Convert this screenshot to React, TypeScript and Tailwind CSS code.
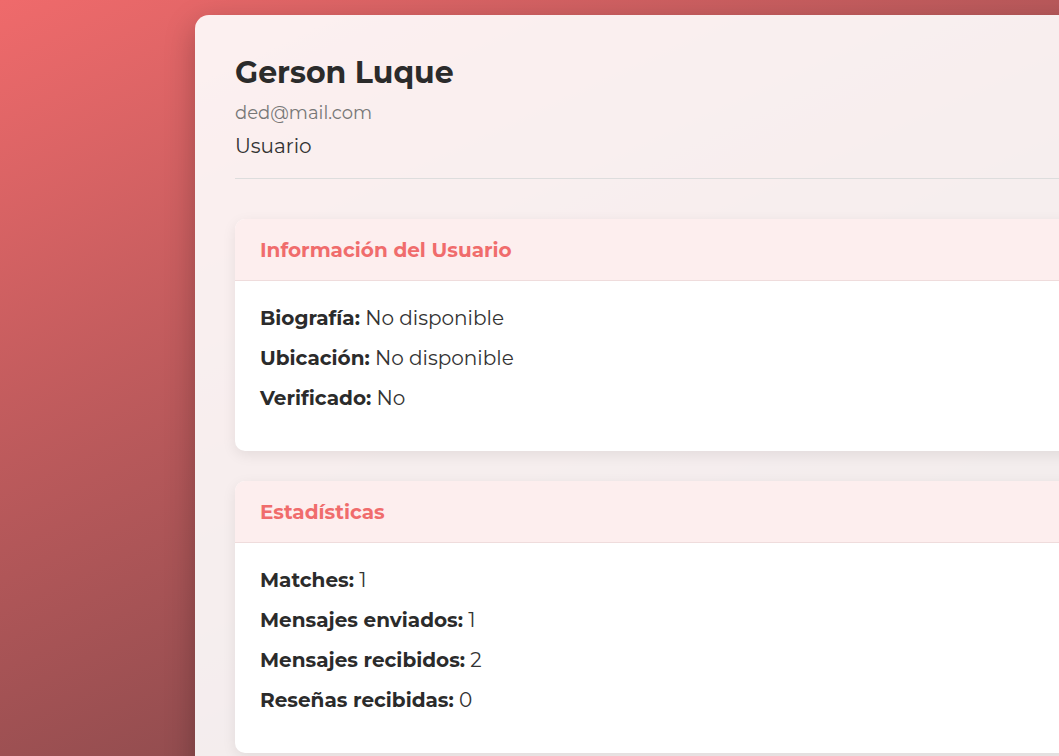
import React from "react";

const font = { fontFamily: '"Montserrat", "Noto Sans", "Open Sans", sans-serif' };

function Row({ label, value }: { label: string; value: string }) {
  return (
    <p className="text-[20px] leading-[26px] text-[#333]">
      <span className="font-bold text-[#2b2b2b]">{label}</span> {value}
    </p>
  );
}

function Section({ title, rows }: { title: string; rows: [string, string][] }) {
  return (
    <div className="bg-white rounded-[10px] shadow-[0_4px_14px_rgba(0,0,0,0.08)] overflow-hidden">
      <div className="h-[62px] flex items-center px-[25px] bg-[#fdeeee] border-b border-[#efdcdc]">
        <h2 className="text-[20px] font-bold text-[#f06c6c]">{title}</h2>
      </div>
      <div className="px-[25px] pt-[24px] pb-[40px] flex flex-col gap-[14px]">
        {rows.map(([l, v]) => (
          <Row key={l} label={l} value={v} />
        ))}
      </div>
    </div>
  );
}

export default function App() {
  return (
    <div
      className="w-[1059px] h-[756px] overflow-hidden bg-[linear-gradient(155deg,#ef6a6b_0%,#673f42_100%)]"
      style={font}
    >
      <div className="ml-[195px] mt-[15px] w-[1000px] min-h-[900px] rounded-[14px] bg-white/90 shadow-[0_10px_30px_rgba(0,0,0,0.25)] px-[40px] pt-[40px]">
        <h1 className="text-[30px] leading-[36px] font-bold text-[#2b2b2b]">Gerson Luque</h1>
        <p className="mt-[10px] text-[18px] leading-[24px] text-[#777]">ded@mail.com</p>
        <p className="mt-[8px] text-[20px] leading-[26px] text-[#333]">Usuario</p>
        <div className="mt-[19px] border-t border-[#ddd]" />
        <div className="mt-[40px] flex flex-col gap-[30px]">
          <Section
            title="Información del Usuario"
            rows={[
              ["Biografía:", "No disponible"],
              ["Ubicación:", "No disponible"],
              ["Verificado:", "No"],
            ]}
          />
          <Section
            title="Estadísticas"
            rows={[
              ["Matches:", "1"],
              ["Mensajes enviados:", "1"],
              ["Mensajes recibidos:", "2"],
              ["Reseñas recibidas:", "0"],
            ]}
          />
        </div>
      </div>
    </div>
  );
}
